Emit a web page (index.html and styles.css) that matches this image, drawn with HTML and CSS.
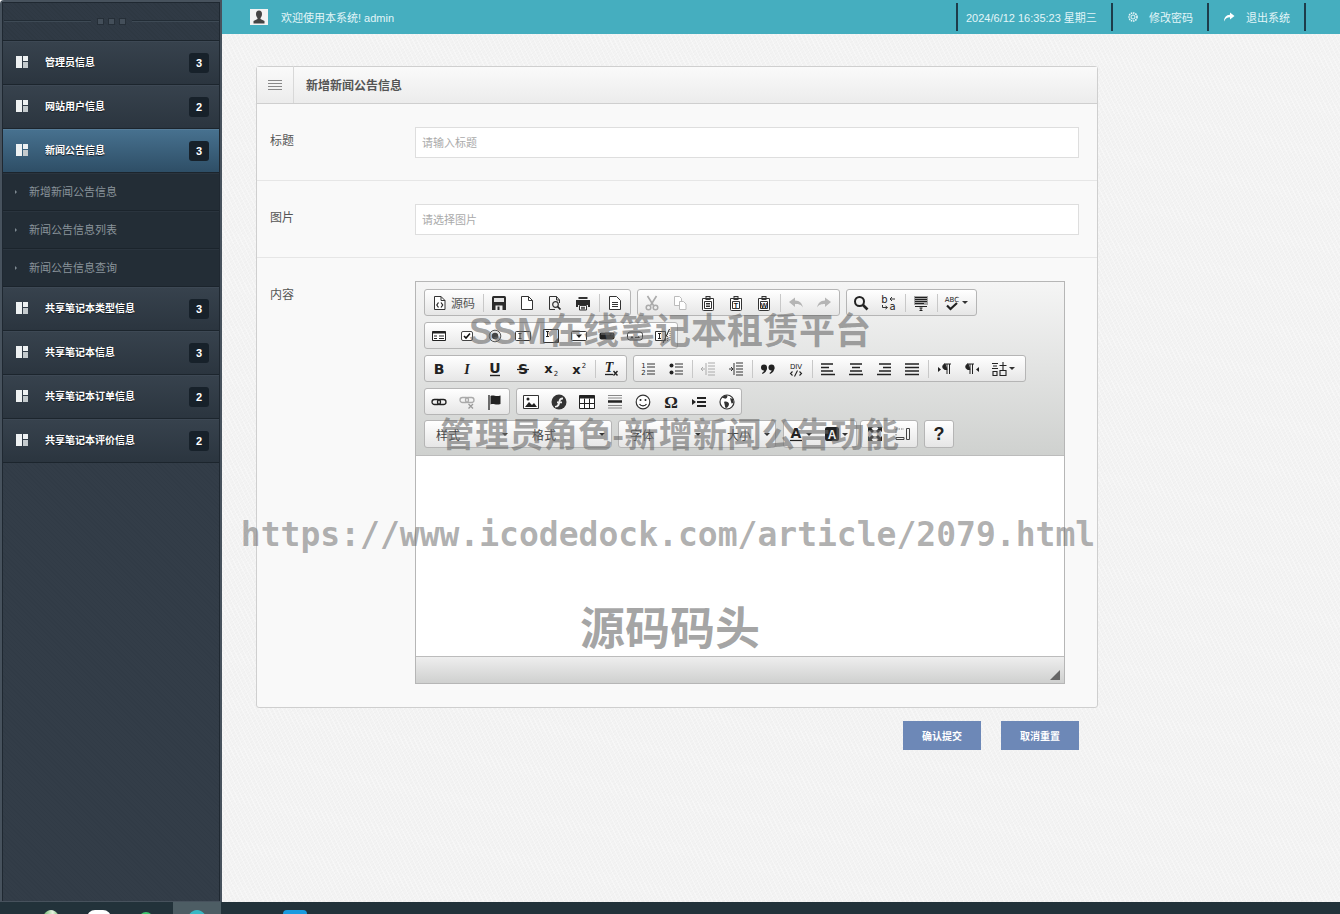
FILE: index.html
```html
<!DOCTYPE html>
<html lang="zh-CN">
<head>
<meta charset="utf-8">
<title>新增新闻公告信息</title>
<link rel="stylesheet" href="styles.css">
</head>
<body>
<svg class="defs" width="0" height="0">
  <symbol id="menu" viewBox="0 0 14 14"><path d="M0 2.500h14M0 5.500h14M0 8.500h14M0 11.500h14" stroke="currentColor" fill="none"/></symbol>
  <symbol id="grid" viewBox="0 0 14 14"><path d="M1 1h6v12H1z" fill="#eef1f2"/><path d="M8 1h5v5H8z" fill="#eef1f2"/><path d="M8 7h5v6H8z" fill="#c4cacd"/></symbol>
  <symbol id="source" viewBox="0 0 16 16"><path d="M2.500 1.500h6.500l4 4v9h-10.500z" fill="#fff" stroke="#333"/><path d="M9 1.500v4h4" fill="none" stroke="#333"/><path d="M6.500 7.500 4.800 10l1.700 2.500M9 7.500l1.700 2.500L9 12.500" fill="none" stroke="#222" stroke-width="1.200"/></symbol>
  <symbol id="save" viewBox="0 0 16 16"><path d="M1 2.500Q1 1 2.500 1h11Q15 1 15 2.500V15H1z" fill="#2b2b2b"/><path d="M3 3h10v4H3z" fill="#e4e4e4"/><path d="M4.500 10.500h7V15h-7z" fill="#eee"/><path d="M6.500 11.500h2V15h-2z" fill="#2b2b2b"/></symbol>
  <symbol id="newpage" viewBox="0 0 16 16"><path d="M2.500 1.500h7l4 4v9h-11z" fill="#fff" stroke="#333"/><path d="M9.500 1.500v4h4" fill="none" stroke="#333"/></symbol>
  <symbol id="preview" viewBox="0 0 16 16"><path d="M12.500 8V5l-3-3.500h-7v13H8" fill="none" stroke="#333"/><path d="M9.500 1.500V5h3" fill="none" stroke="#333"/><circle cx="8.500" cy="9.500" r="2.800" fill="none" stroke="#333" stroke-width="1.200"/><path d="m10.500 11.500 3 3" stroke="#222" stroke-width="1.700"/></symbol>
  <symbol id="print" viewBox="0 0 16 16"><path d="M3.500 2h9v2h-9z" fill="#333"/><path d="M1 5h14v7h-2v-2H3v2H1z" fill="#2b2b2b"/><path d="M4.500 10.500h7V15h-7z" fill="#fff" stroke="#333"/><path d="M6 12.300h4M6 13.800h4" stroke="#333"/></symbol>
  <symbol id="template" viewBox="0 0 16 16"><path d="M2.500 1.500h7l4 4v9h-11z" fill="#fff" stroke="#333"/><path d="M5 7.500h6M5 9.500h6M5 11.500h6" stroke="#333"/></symbol>
  <symbol id="cut" viewBox="0 0 16 16"><g stroke="#aaa" fill="none"><path d="M3.500 1l6 9.500M12.500 1l-6 9.500" stroke-width="1.600"/><circle cx="4.500" cy="12.500" r="2.300" stroke-width="1.500"/><circle cx="11.500" cy="12.500" r="2.300" stroke-width="1.500"/></g></symbol>
  <symbol id="copy" viewBox="0 0 16 16"><g stroke="#bbb" fill="#fff"><path d="M2.500 1.500h5l2 2v7h-7z"/><path d="M7.500 6.500h4l2.500 2.500v5.500H7.500z"/></g></symbol>
  <symbol id="clipboard" viewBox="0 0 16 16"><path d="M2.500 3.500h11v11q0 1-1 1h-9q-1 0-1-1z" fill="#fff" stroke="#333"/><path d="M5.500 1h5v4h-5z" fill="#333"/><path d="M6.500 2h3v1h-3z" fill="#ddd"/><path d="M4.500 6.500h7v7h-7z" fill="#fff" stroke="#333"/></symbol>
  <symbol id="undo" viewBox="0 0 16 16"><path d="M1 7l6-4.500V5.500c5 0 7 3 8 7-2-3-4-3.500-8-3.500v3z" fill="#b5b5b5"/></symbol>
  <symbol id="redo" viewBox="0 0 16 16"><path d="M15 7 9 2.500V5.500c-5 0-7 3-8 7 2-3 4-3.500 8-3.500v3z" fill="#b5b5b5"/></symbol>
  <symbol id="find" viewBox="0 0 16 16"><circle cx="6.500" cy="6.500" r="4.500" fill="none" stroke="#222" stroke-width="2"/><path d="m10 10 4.500 4.500" stroke="#222" stroke-width="2.600"/></symbol>
  <symbol id="selectall" viewBox="0 0 16 16"><path d="M1 1h14v9H1z" fill="#a5a5a5"/><path d="M2 2.500h12M2 4.500h12M2 6.500h12M2 8.500h9" stroke="#222"/><path d="M2 11.500h12M6.500 13h3M6.500 15.500h3M8 13v2.500" stroke="#222"/></symbol>
  <symbol id="form" viewBox="0 0 16 16"><path d="M1.500 3.500h13v9h-13z" fill="#fff" stroke="#222"/><path d="M1.500 3.500h13v2h-13z" fill="#222"/><path d="M3 8h3M3 10.500h3M8 8h5M8 10.500h5" stroke="#222" stroke-width="1.200"/></symbol>
  <symbol id="check" viewBox="0 0 16 16"><rect x="2.500" y="3.500" width="11" height="9" rx="1.500" fill="#fff" stroke="#444"/><path d="m5 8 2 2 4-4.500" fill="none" stroke="#111" stroke-width="1.600"/></symbol>
  <symbol id="radio" viewBox="0 0 16 16"><circle cx="8" cy="8" r="5.800" fill="#e4e4e4" stroke="#555"/><circle cx="8" cy="8" r="3.200" fill="#444"/></symbol>
  <symbol id="field" viewBox="0 0 16 16"><rect x=".5" y="3.500" width="15" height="9" rx="1" fill="#fff" stroke="#333"/><path d="M3.500 5.500h3M3.500 10.500h3M5 5.500v5" stroke="#222"/></symbol>
  <symbol id="area" viewBox="0 0 16 16"><path d="M.5 1.500h15v13H.5z" fill="#fff" stroke="#333"/><path d="M3 3.500h3M3 8.500h3M4.500 3.500v5" stroke="#222"/><path d="M11 14l4-4v4z" fill="#555"/></symbol>
  <symbol id="select" viewBox="0 0 16 16"><rect x=".5" y="3.500" width="15" height="9" rx="1" fill="#fff" stroke="#333"/><path d="M5 6.500h6L8 10z" fill="#222"/></symbol>
  <symbol id="button" viewBox="0 0 16 16"><rect x=".5" y="4.500" width="15" height="7" rx="2" fill="#222"/><path d="M2 6h12" stroke="#777"/></symbol>
  <symbol id="imgbutton" viewBox="0 0 16 16"><rect x=".5" y="4" width="15" height="8" rx="2.500" fill="#fff" stroke="#333"/><path d="M3 10.500l2-2.500 2 2.500 2-2 1 1 1.500-1.500 1.500 2z" fill="#222"/></symbol>
  <symbol id="hidden" viewBox="0 0 16 16"><path d="M.5 3.500h10v9H.5z" fill="#fff" stroke="#333"/><path d="M3 5.500h3M3 10.500h3M4.500 5.500v5" stroke="#222"/><path d="M14.500 1 8 15" stroke="#222"/><path d="M12.500 6v7M15 3v10" stroke="#666" stroke-dasharray="1 1"/></symbol>
  <symbol id="ul" viewBox="0 0 16 16"><circle cx="3.500" cy="4.500" r="2" fill="#222"/><circle cx="3.500" cy="11.500" r="2" fill="#222"/><path d="M7 3h8M7 6h8M7 10h8M7 13h8" stroke="#333" stroke-width="1.100"/></symbol>
  <symbol id="outdent" viewBox="0 0 16 16"><path d="M8 2h7M8 5h7M8 8h7M8 11h7M8 14h7M6 2v12" stroke="#aaa"/><path d="M5 8H1M3 6 1 8l2 2" fill="none" stroke="#aaa"/></symbol>
  <symbol id="indent" viewBox="0 0 16 16"><path d="M8 2h7M8 5h7M8 8h7M8 11h7M8 14h7M6 2v12" stroke="#333"/><path d="M1 8h4M3 6l2 2-2 2" fill="none" stroke="#333"/></symbol>
  <symbol id="quote" viewBox="0 0 16 16"><circle cx="4" cy="6.500" r="3" fill="#222"/><path d="M7 6.500c0 3.500-2 5.500-4.500 6.500l-.5-1c1.500-.8 2.200-2 2.500-4z" fill="#222"/><circle cx="11.500" cy="6.500" r="3" fill="#222"/><path d="M14.500 6.500c0 3.500-2 5.500-4.500 6.500l-.5-1c1.500-.8 2.200-2 2.500-4z" fill="#222"/></symbol>
  <symbol id="left" viewBox="0 0 16 16"><path d="M1 3h12M1 6.500h8M1 10h12M1 13.500h14" stroke="#222" stroke-width="1.500"/></symbol>
  <symbol id="center" viewBox="0 0 16 16"><path d="M2 3h12M4 6.500h8M2 10h12M1 13.500h14" stroke="#222" stroke-width="1.500"/></symbol>
  <symbol id="right" viewBox="0 0 16 16"><path d="M3 3h12M7 6.500h8M3 10h12M1 13.500h14" stroke="#222" stroke-width="1.500"/></symbol>
  <symbol id="justify" viewBox="0 0 16 16"><path d="M1 3h14M1 6.500h14M1 10h14M1 13.500h14" stroke="#222" stroke-width="1.500"/></symbol>
  <symbol id="ltr" viewBox="0 0 16 16"><path d="M2 6l3 2.500L2 11z" fill="#222"/><path d="M8 3h7M11 3v10M13.500 3v10M9 3a2.800 2.800 0 0 0 0 5.500h2z" fill="#222" stroke="#222"/></symbol>
  <symbol id="rtl" viewBox="0 0 16 16"><path d="M15 6l-3 2.500 3 2.500z" fill="#222"/><path d="M3 3h7M6 3v10M8.500 3v10M4 3a2.800 2.800 0 0 0 0 5.500h2z" fill="#222" stroke="#222"/></symbol>
  <symbol id="link" viewBox="0 0 16 16"><rect x="1" y="5.500" width="8.500" height="5" rx="2.500" fill="none" stroke="#222" stroke-width="1.300"/><rect x="6.500" y="5.500" width="8.500" height="5" rx="2.500" fill="none" stroke="#222" stroke-width="1.300"/></symbol>
  <symbol id="unlink" viewBox="0 0 16 16"><rect x="1" y="3.500" width="8.500" height="5" rx="2.500" fill="none" stroke="#aaa" stroke-width="1.300"/><rect x="6.500" y="3.500" width="8.500" height="5" rx="2.500" fill="none" stroke="#aaa" stroke-width="1.300"/><path d="m9.500 10 4.500 4.500M14 10l-4.500 4.500" stroke="#999" stroke-width="1.300"/></symbol>
  <symbol id="anchor" viewBox="0 0 16 16"><path d="M2 1v15" stroke="#222" stroke-width="1.300"/><path d="M3.500 2c3-1.500 5 1 10-.5v8.500c-5 1.500-7-1-10 .5z" fill="#222"/></symbol>
  <symbol id="image" viewBox="0 0 16 16"><path d="M.5 1.500h15v13H.5z" fill="#fff" stroke="#333"/><path d="M2 13l4-5 3 3 2-2 3 4z" fill="#222"/><circle cx="5" cy="5" r="1.500" fill="#222"/></symbol>
  <symbol id="flash" viewBox="0 0 16 16"><circle cx="8" cy="8" r="7.500" fill="#333"/><path d="M12 3.500C9 3.500 8 5 7.500 7.500H6v1.800h1C6.500 11 5.800 11.800 4 12v1.500c3.500 0 4.500-1.800 5-4.200h2V7.500H9.300C9.700 6 10.500 5.500 12 5.500z" fill="#eee"/></symbol>
  <symbol id="table" viewBox="0 0 16 16"><path d="M.5 1.500h15v13H.5z" fill="#fff" stroke="#222"/><path d="M.5 1.500h15v3H.5z" fill="#222"/><path d="M.5 9.500h15M5.500 4.500v10M10.500 4.500v10" stroke="#222"/></symbol>
  <symbol id="rule" viewBox="0 0 16 16"><path d="M1 1.500h14M1 4h14M1 11.500h14M1 14h14" stroke="#888"/><path d="M1 7.500h14" stroke="#222" stroke-width="2.500"/></symbol>
  <symbol id="smile" viewBox="0 0 16 16"><circle cx="8" cy="8" r="6.800" fill="#fff" stroke="#333" stroke-width="1.200"/><circle cx="5.500" cy="6" r="1" fill="#222"/><circle cx="10.500" cy="6" r="1" fill="#222"/><path d="M4.500 10c1.500 2.500 5.500 2.500 7 0" fill="none" stroke="#222" stroke-width="1.200"/></symbol>
  <symbol id="pagebreak" viewBox="0 0 16 16"><path d="M1 5l4 3-4 3z" fill="#222"/><path d="M6 4h9M6 8h9M6 12h9" stroke="#222" stroke-width="2"/></symbol>
  <symbol id="iframe" viewBox="0 0 16 16"><circle cx="8" cy="8" r="7" fill="#fff" stroke="#333" stroke-width="1.200"/><path d="M3 4c2 0 3 1 4 .5S9 2 8 1.500 4 2 3 4zM5 8c2-1 5 0 5 2s-2 4-3 4-1-3-2-6zM11 4l3 1 .5 4-2 .5z" fill="#333"/></symbol>
  <symbol id="lang" viewBox="0 0 16 16"><path d="M1 2.500h6M2 5h4M1 7.500h6M2 10.500h4v4H2zM8.500 4.500h7M12 1v8M9 9.500h6v5H9z" fill="none" stroke="#222" stroke-width="1.100"/></symbol>
  <symbol id="maximize" viewBox="0 0 16 16"><path d="M1 1h5L4.500 2.500 7 5 5 7 2.500 4.500 1 6zM15 1v5l-1.500-1.500L11 7 9 5l2.500-2.500L10 1zM1 15v-5l1.500 1.500L5 9l2 2-2.500 2.500L6 15zM15 15h-5l1.500-1.500L9 11l2-2 2.500 2.500L15 10z" fill="#222"/></symbol>
  <symbol id="blocks" viewBox="0 0 16 16"><path d="M1 3h8M1 3v7" fill="none" stroke="#777" stroke-dasharray="1.500 1"/><path d="M11.500 2.500h3v11h-3zM1 11.500h8v2H1z" fill="none" stroke="#444"/></symbol>
  <symbol id="share" viewBox="0 0 12 12"><path d="M7 1.500 11.500 5 7 8.500V6.300C4 6.300 2.500 7.500 1 10.500 1 6.500 3 4 7 3.800z" fill="#fff"/></symbol>
  <symbol id="gear" viewBox="0 0 12 12"><circle cx="6" cy="6" r="4" fill="none" stroke="#eaf8fa" stroke-width="1.600" stroke-dasharray="1.500 .8"/><circle cx="6" cy="6" r="2" fill="none" stroke="#eaf8fa"/></symbol>
</svg>

<div class="shell">
  <aside class="sidebar">
    <div class="side-head">
      <span class="side-rule"></span>
      <span class="dots"><i></i><i></i><i></i></span>
      <span class="side-rule"></span>
    </div>
    <nav class="side-nav">
      <a class="nav-item"><svg class="nav-ico"><use href="#grid"/></svg><span class="nav-text">管理员信息</span><b class="badge">3</b></a>
      <a class="nav-item"><svg class="nav-ico"><use href="#grid"/></svg><span class="nav-text">网站用户信息</span><b class="badge">2</b></a>
      <a class="nav-item active"><svg class="nav-ico"><use href="#grid"/></svg><span class="nav-text">新闻公告信息</span><b class="badge">3</b></a>
      <a class="sub-item"><span>新增新闻公告信息</span></a>
      <a class="sub-item"><span>新闻公告信息列表</span></a>
      <a class="sub-item"><span>新闻公告信息查询</span></a>
      <a class="nav-item"><svg class="nav-ico"><use href="#grid"/></svg><span class="nav-text">共享笔记本类型信息</span><b class="badge">3</b></a>
      <a class="nav-item"><svg class="nav-ico"><use href="#grid"/></svg><span class="nav-text">共享笔记本信息</span><b class="badge">3</b></a>
      <a class="nav-item"><svg class="nav-ico"><use href="#grid"/></svg><span class="nav-text">共享笔记本订单信息</span><b class="badge">2</b></a>
      <a class="nav-item"><svg class="nav-ico"><use href="#grid"/></svg><span class="nav-text">共享笔记本评价信息</span><b class="badge">2</b></a>
    </nav>
  </aside>

  <div class="main">
    <header class="topbar">
      <span class="avatar">
        <svg viewBox="0 0 18 16" width="18" height="16"><path d="M6 5a3 3.500 0 0 1 6 0c0 2-1 3.500-1.500 4v1l4 2v2.500h-11V12l4-2V9C7 8.500 6 7 6 5z" fill="#444"/></svg>
      </span>
      <span class="welcome">欢迎使用本系统! admin</span>
      <div class="top-links">
        <span class="top-cell">2024/6/12 16:35:23 星期三</span>
        <a class="top-cell pwd"><svg class="top-ico"><use href="#gear"/></svg>修改密码</a>
        <a class="top-cell quit"><svg class="top-ico"><use href="#share"/></svg>退出系统</a>
      </div>
    </header>

    <section class="content">
      <div class="panel">
        <div class="panel-head">
          <span class="head-ico"><svg width="14" height="14"><use href="#menu"/></svg></span>
          <h1 class="panel-title">新增新闻公告信息</h1>
        </div>
        <div class="row">
          <label class="row-label">标题</label>
          <input class="text-input" placeholder="请输入标题">
        </div>
        <div class="row">
          <label class="row-label">图片</label>
          <input class="text-input" placeholder="请选择图片">
        </div>
        <div class="row last">
          <label class="row-label">内容</label>
          <div class="editor">
            <div class="toolbar">
              <div class="tb-row">
                <div class="tb-group pad">
                  <span class="btn wide"><svg><use href="#source"/></svg><em>源码</em></span><i class="sep"></i>
                  <span class="btn"><svg><use href="#save"/></svg></span>
                  <span class="btn"><svg><use href="#newpage"/></svg></span>
                  <span class="btn"><svg><use href="#preview"/></svg></span>
                  <span class="btn"><svg><use href="#print"/></svg></span><i class="sep"></i>
                  <span class="btn"><svg><use href="#template"/></svg></span>
                </div>
                <div class="tb-group pad">
                  <span class="btn"><svg><use href="#cut"/></svg></span>
                  <span class="btn"><svg><use href="#copy"/></svg></span>
                  <span class="btn"><svg viewBox="0 0 16 16"><use href="#clipboard" width="16" height="16"/><path d="M6 8.500h4M6 10h4M6 11.500h4" stroke="#333"/></svg></span>
                  <span class="btn"><svg viewBox="0 0 16 16"><use href="#clipboard" width="16" height="16"/><text x="8" y="12.500" class="tiny">T</text></svg></span>
                  <span class="btn"><svg viewBox="0 0 16 16"><use href="#clipboard" width="16" height="16"/><text x="8" y="12.500" class="tiny">W</text></svg></span><i class="sep"></i>
                  <span class="btn"><svg><use href="#undo"/></svg></span>
                  <span class="btn"><svg><use href="#redo"/></svg></span>
                </div>
                <div class="tb-group">
                  <span class="btn"><svg><use href="#find"/></svg></span>
                  <span class="btn"><svg viewBox="0 0 16 16"><text x="3.500" y="7.500" class="mid">b</text><text x="11.500" y="15" class="mid">a</text><path d="M9 4h5M11 2 9 4l2 2M1.500 10v2.500H6M4.500 11l2 1.500-2 1.500" fill="none" stroke="#333"/></svg></span><i class="sep"></i>
                  <span class="btn"><svg><use href="#selectall"/></svg></span><i class="sep"></i>
                  <span class="btn drop"><svg viewBox="0 0 16 16"><text x="8" y="7" class="small">ABC</text><path d="M3 10.500l3.500 3.500L13 8" fill="none" stroke="#222" stroke-width="2.200"/></svg><u class="caret"></u></span>
                </div>
              </div>
              <div class="tb-row">
                <div class="tb-group">
                  <span class="btn"><svg><use href="#form"/></svg></span>
                  <span class="btn"><svg><use href="#check"/></svg></span>
                  <span class="btn"><svg><use href="#radio"/></svg></span>
                  <span class="btn"><svg><use href="#field"/></svg></span>
                  <span class="btn"><svg><use href="#area"/></svg></span>
                  <span class="btn"><svg><use href="#select"/></svg></span>
                  <span class="btn"><svg><use href="#button"/></svg></span>
                  <span class="btn"><svg><use href="#imgbutton"/></svg></span>
                  <span class="btn"><svg><use href="#hidden"/></svg></span>
                </div>
              </div>
              <div class="tb-row">
                <div class="tb-group pad">
                  <span class="btn"><svg viewBox="0 0 16 16"><text x="8" y="13" class="big">B</text></svg></span>
                  <span class="btn"><svg viewBox="0 0 16 16"><text x="8" y="13" class="big ital">I</text></svg></span>
                  <span class="btn"><svg viewBox="0 0 16 16"><text x="8" y="11.500" class="big">U</text><path d="M3 14.500h10" stroke="#222" stroke-width="1.400"/></svg></span>
                  <span class="btn"><svg viewBox="0 0 16 16"><text x="8" y="13" class="big">S</text><path d="M2 8.500h12" stroke="#222" stroke-width="1.200"/></svg></span>
                  <span class="btn"><svg viewBox="0 0 16 16"><text x="5.500" y="11.500" class="big2">x</text><text x="13" y="15" class="small">2</text></svg></span>
                  <span class="btn"><svg viewBox="0 0 16 16"><text x="5.500" y="13" class="big2">x</text><text x="13" y="7" class="small">2</text></svg></span><i class="sep"></i>
                  <span class="btn"><svg viewBox="0 0 16 16"><text x="6" y="11" class="big ital">T</text><path d="M2 13.500h8" stroke="#222" stroke-width="1.300"/><path d="m10.500 10 4 4.500M14.500 10l-4 4.500" stroke="#222" stroke-width="1.400"/></svg></span>
                </div>
                <div class="tb-group pad">
                  <span class="btn"><svg viewBox="0 0 16 16"><text x="3.500" y="6.500" class="small">1</text><text x="3.500" y="14" class="small">2</text><path d="M7 3h8M7 6h8M7 10h8M7 13h8" stroke="#333" stroke-width="1.100"/></svg></span>
                  <span class="btn"><svg><use href="#ul"/></svg></span><i class="sep"></i>
                  <span class="btn"><svg><use href="#outdent"/></svg></span>
                  <span class="btn"><svg><use href="#indent"/></svg></span><i class="sep"></i>
                  <span class="btn"><svg><use href="#quote"/></svg></span>
                  <span class="btn"><svg viewBox="0 0 16 16"><text x="8" y="8" class="small">DIV</text><path d="M4.500 10.500 2.500 12.500l2 2M11.500 10.500l2 2-2 2M9.500 9.500l-3 6" fill="none" stroke="#222" stroke-width="1.100"/></svg></span><i class="sep"></i>
                  <span class="btn"><svg><use href="#left"/></svg></span>
                  <span class="btn"><svg><use href="#center"/></svg></span>
                  <span class="btn"><svg><use href="#right"/></svg></span>
                  <span class="btn"><svg><use href="#justify"/></svg></span><i class="sep"></i>
                  <span class="btn"><svg><use href="#ltr"/></svg></span>
                  <span class="btn"><svg><use href="#rtl"/></svg></span>
                  <span class="btn drop lang"><svg><use href="#lang"/></svg><u class="caret"></u></span>
                </div>
              </div>
              <div class="tb-row">
                <div class="tb-group">
                  <span class="btn"><svg><use href="#link"/></svg></span>
                  <span class="btn"><svg><use href="#unlink"/></svg></span>
                  <span class="btn"><svg><use href="#anchor"/></svg></span>
                </div>
                <div class="tb-group">
                  <span class="btn"><svg><use href="#image"/></svg></span>
                  <span class="btn"><svg><use href="#flash"/></svg></span>
                  <span class="btn"><svg><use href="#table"/></svg></span>
                  <span class="btn"><svg><use href="#rule"/></svg></span>
                  <span class="btn"><svg><use href="#smile"/></svg></span>
                  <span class="btn"><svg viewBox="0 0 16 16"><text x="8" y="14" class="huge">Ω</text></svg></span>
                  <span class="btn"><svg><use href="#pagebreak"/></svg></span>
                  <span class="btn"><svg><use href="#iframe"/></svg></span>
                </div>
              </div>
              <div class="tb-row combos">
                <div class="tb-group">
                  <span class="combo c-style">样式<u class="caret"></u></span>
                  <span class="combo c-format">格式<u class="caret"></u></span>
                </div>
                <div class="tb-group">
                  <span class="combo c-font">字体<u class="caret"></u></span>
                  <span class="combo c-size">大小<u class="caret"></u></span>
                </div>
                <div class="tb-group color-group">
                  <span class="btn drop"><svg viewBox="0 0 16 16"><text x="8" y="12" class="big">A</text><path d="M2 14.500h12" stroke="#222" stroke-width="1.200"/></svg><u class="caret"></u></span>
                  <span class="btn drop"><svg viewBox="0 0 16 16"><rect x="1" y="1" width="14" height="14" rx="2" fill="#222"/><text x="8" y="12.500" class="bigw">A</text></svg><u class="caret"></u></span>
                </div>
                <div class="tb-group tight">
                  <span class="btn"><svg><use href="#maximize"/></svg></span>
                  <span class="btn"><svg><use href="#blocks"/></svg></span>
                </div>
                <div class="tb-group">
                  <span class="btn help-mark">?</span>
                </div>
              </div>
            </div>
            <div class="edit-area"></div>
            <div class="edit-foot"><span class="grip"></span></div>
          </div>
        </div>
      </div>
      <div class="actions">
        <button class="action" type="button">确认提交</button>
        <button class="action" type="button">取消重置</button>
      </div>
    </section>
  </div>
</div>

<footer class="taskbar">
  <span class="task t-green"></span>
  <span class="task t-white"></span>
  <span class="task t-lime"></span>
  <span class="task-on"><span class="task t-teal"></span></span>
  <span class="task t-blue"></span>
</footer>

<div class="stamp">
  <p class="stamp-line s1">SSM在线笔记本租赁平台</p>
  <p class="stamp-line s2">管理员角色-新增新闻公告功能</p>
  <p class="stamp-line s3">https://www.icodedock.com/article/2079.html</p>
  <p class="stamp-line s4">源码码头</p>
</div>
</body>
</html>
```

FILE: styles.css
```css
* { box-sizing: border-box; }

html, body {
  margin: 0;
  height: 914px;
  overflow: hidden;
}

body {
  position: relative;
  font-family: "Liberation Sans", "Noto Sans CJK SC", sans-serif;
  font-size: 12px;
  color: #555;
  background:
    repeating-linear-gradient(63deg, rgba(255, 255, 255, .35) 0 1px, transparent 1px 4px),
    repeating-linear-gradient(-37deg, rgba(0, 0, 0, .012) 0 1px, transparent 1px 3px),
    #f3f3f3;
}

.defs { position: absolute; }

.tiny, .small, .mid, .big, .big2, .bigw, .huge {
  font-family: "Liberation Sans", sans-serif;
  text-anchor: middle;
  fill: #222;
}
.tiny { font-size: 7px; font-weight: 700; }
.small { font-size: 7px; font-family: "DejaVu Sans", sans-serif; }
.mid { font-size: 10px; font-family: "DejaVu Sans", sans-serif; }
.big { font-size: 14px; font-weight: 700; font-family: "DejaVu Sans", sans-serif; }
.big2 { font-size: 13px; font-weight: 700; font-family: "DejaVu Sans", sans-serif; }
.bigw { font-size: 12px; font-weight: 700; fill: #eee; }
.huge { font-size: 17px; font-weight: 700; font-family: "Liberation Serif", serif; }
.ital { font-style: italic; font-family: "Liberation Serif", serif; }

.shell {
  display: flex;
  height: 902px;
}

/* Side navigation */
.sidebar {
  flex: none;
  width: 222px;
  padding: 2px 2px 0 2px;
  background: #47525d;
  border-radius: 4px 0 0 0;
}

.side-nav,
.side-head {
  border-left: 1px solid #1f2831;
  border-right: 1px solid #1f2831;
}

.side-nav {
  height: 860px;
  background: repeating-linear-gradient(45deg, #313b46 0 1px, #333d48 1px 3px);
}

.side-head {
  display: flex;
  align-items: center;
  height: 39px;
  padding: 0 0 1px 1px;
  gap: 6px;
  border-top: 1px solid #1f2831;
  border-bottom: 1px solid #1c252d;
  background: repeating-linear-gradient(45deg, #2e3842 0 1px, #303a45 1px 3px);
}

.side-rule {
  flex: 1;
  height: 2px;
  background: #3e4a55;
  border-top: 1px solid #222c35;
}

.dots { display: flex; gap: 4px; }
.dots i {
  width: 7px;
  height: 7px;
  background: #444f5a;
  border: 1px solid #262f38;
}

.nav-item {
  display: flex;
  align-items: center;
  height: 44px;
  padding: 0 10px 0 12px;
  color: #fff;
  font-size: 10px;
  font-weight: 700;
  background: linear-gradient(#37424d, #2b353f);
  border-top: 1px solid #3d4854;
  border-bottom: 1px solid #1c252d;
}

.nav-item.active {
  background: linear-gradient(#47718f, #2e4e66);
  border-top-color: #567c98;
}

.nav-ico {
  flex: none;
  width: 14px;
  height: 14px;
  margin: 0 15px 0 0;
  position: relative;
  top: -1px;
}

.nav-text {
  flex: 1;
  position: relative;
  top: -2px;
  left: 1px;
  text-shadow: 0 1px 1px #10171d;
}

.badge {
  width: 20px;
  height: 20px;
  border-radius: 3px;
  background: #17212a;
  color: #fff;
  font-size: 11px;
  line-height: 20px;
  text-align: center;
}

.sub-item {
  display: flex;
  align-items: center;
  height: 38px;
  padding-left: 26px;
  font-size: 11px;
  color: #8a949b;
  background: #232d36;
  border-bottom: 1px solid #1b242c;
  border-top: 1px solid #2a343e;
  position: relative;
}
.sub-item span { margin-top: -2px; }

.sub-item::before {
  content: "";
  position: absolute;
  left: 12px;
  top: 16px;
  width: 0;
  height: 0;
  border-left: 2px solid #7f8a92;
  border-top: 2px solid transparent;
  border-bottom: 2px solid transparent;
}

/* Main column */
.main {
  flex: 1;
  display: flex;
  flex-direction: column;
  min-width: 0;
}

.topbar {
  flex: none;
  display: flex;
  align-items: center;
  height: 34px;
  padding-left: 28px;
  background: #45aebf;
  color: #e2f5f8;
  font-size: 11px;
}

.avatar {
  display: flex;
  width: 18px;
  height: 16px;
  background: #f3f3f3;
}

.welcome { margin-left: 13px; }

.top-links {
  display: flex;
  align-items: center;
  margin-left: auto;
  margin-right: 34px;
}

.top-cell {
  display: flex;
  align-items: center;
  height: 28px;
  border-left: 2px solid #1d3c4a;
  padding-left: 8px;
}
.top-cell:first-child { width: 155px; }
.pwd { width: 96px; padding-left: 14px; }
.quit { width: 99px; padding-left: 14px; border-right: 2px solid #1d3c4a; }
.top-ico { width: 12px; height: 12px; margin-right: 10px; }
.quit .top-ico { margin-right: 11px; }

.content {
  flex: 1;
  padding: 32px 0 0 34px;
}

.panel {
  width: 842px;
  background: #f9f9f9;
  border: 1px solid #cfcfcf;
  border-radius: 3px;
}

.panel-head {
  display: flex;
  align-items: center;
  height: 37px;
  padding-bottom: 2px;
  background: linear-gradient(#fafafa, #ececec);
  border-bottom: 1px solid #cfcfcf;
}

.head-ico {
  display: flex;
  align-items: center;
  justify-content: center;
  width: 37px;
  height: 37px;
  margin-top: 1px;
  color: #888;
  border-right: 1px solid #d8d8d8;
}

.panel-title {
  margin: 0 0 0 12px;
  font-size: 12px;
  font-weight: 700;
  color: #555;
}

.row {
  display: flex;
  padding: 23px 0 22px 13px;
  border-bottom: 1px solid #e6e6e6;
}
.row.last { border-bottom: 0; padding-bottom: 23px; }

.row-label {
  flex: none;
  width: 145px;
  padding-top: 4px;
  color: #555;
}

.text-input {
  width: 664px;
  height: 31px;
  padding: 0 6px;
  border: 1px solid #dedede;
  background: #fff;
  font: 11px "Liberation Sans", "Noto Sans CJK SC", sans-serif;
  outline: 0;
}
.text-input::placeholder { color: #aaa; }

/* Rich text editor */
.editor {
  width: 650px;
  height: 403px;
  display: flex;
  flex-direction: column;
  border: 1px solid #b6b6b6;
}

.toolbar {
  flex: none;
  height: 174px;
  padding: 7px 0 0 8px;
  background: linear-gradient(#f5f5f5, #cfd1cf);
  border-bottom: 1px solid #bcbcbc;
}

.tb-row {
  display: flex;
  gap: 6px;
  height: 27px;
  margin-bottom: 6px;
}
.tb-row.combos { height: 28px; margin: -1px 0 0; }

.tb-group {
  display: flex;
  align-items: center;
  height: 100%;
  background: linear-gradient(#fff, #e6e6e6);
  border: 1px solid #b5b5b5;
  border-radius: 3px;
}
.tb-group.pad { padding-right: 1px; }

.btn {
  flex: none;
  display: flex;
  align-items: center;
  justify-content: center;
  width: 28px;
  height: 100%;
}
.btn svg { width: 16px; height: 16px; flex: none; }
.btn em {
  margin-left: 3px;
  font-style: normal;
  font-size: 12px;
  color: #555;
}
.btn.wide { width: 56px; justify-content: flex-start; padding-left: 7px; }
.btn.drop { width: 37px; padding-right: 4px; gap: 2px; }
.btn.lang { width: 38px; }

.sep {
  flex: none;
  width: 4px;
  height: 18px;
  background: linear-gradient(#c8c8c8, #c8c8c8) center / 1px 100% no-repeat;
}

.caret {
  flex: none;
  width: 0;
  height: 0;
  border-top: 3px solid #333;
  border-left: 3px solid transparent;
  border-right: 3px solid transparent;
}

.combo {
  display: flex;
  align-items: center;
  justify-content: space-between;
  height: 100%;
  color: #444;
  font-size: 12px;
}
.c-style { width: 97px; padding: 0 14px 0 11px; }
.c-format { width: 89px; padding: 0 6px 0 10px; }
.c-font { width: 93px; padding: 0 11px 0 11px; }
.c-size { width: 63px; padding: 0 5px 0 15px; }

.color-group { margin-left: 1px; }
.color-group .btn.drop { width: 36px; }
.tb-group.tight { margin-left: -3px; }
.help-mark {
  font: 700 18px "Liberation Sans", sans-serif;
  color: #222;
}

.edit-area {
  flex: 1;
  background: #fff;
}

.edit-foot {
  flex: none;
  position: relative;
  height: 27px;
  background: linear-gradient(#eeeeee, #cfd0cf);
  border-top: 1px solid #bcbcbc;
}

.grip {
  position: absolute;
  right: 4px;
  bottom: 3px;
  width: 0;
  height: 0;
  border-left: 10px solid transparent;
  border-bottom: 10px solid #666;
}

.actions {
  display: flex;
  justify-content: flex-end;
  gap: 20px;
  width: 823px;
  margin-top: 13px;
}

.action {
  width: 78px;
  height: 29px;
  padding: 0;
  border: 0;
  background: #6d88b7;
  color: #fff;
  font: 700 10px "Liberation Sans", "Noto Sans CJK SC", sans-serif;
}

/* Bottom strip */
.taskbar {
  position: relative;
  height: 12px;
  display: flex;
  overflow: hidden;
  background: #22323a;
}

.task {
  position: absolute;
  top: 8px;
  width: 18px;
  height: 24px;
  border-radius: 50%;
}
.t-green { left: 42px; background: linear-gradient(90deg, #58b05c, #e6f2e0 60%, #58b05c); }
.t-white { left: 87px; width: 24px; background: #fff; border-radius: 8px; }
.t-lime { left: 137px; top: 10px; background: #3cc76e; }
.task-on {
  position: absolute;
  left: 173px;
  width: 48px;
  height: 12px;
  background: #4d5d64;
}
.t-teal { left: 14px; top: 8px; width: 20px; background: #38b8c4; }
.t-blue { left: 283px; width: 24px; border-radius: 4px; background: #1b9be0; }

/* Overlaid site stamp */
.stamp {
  position: absolute;
  inset: 0;
  pointer-events: none;
}

.stamp-line {
  position: absolute;
  left: 0;
  width: 1340px;
  margin: 0;
  text-align: center;
  white-space: nowrap;
  font-family: "Liberation Sans", "Noto Sans CJK SC", sans-serif;
  font-weight: 700;
  color: rgba(105, 105, 105, 0.6);
  line-height: 1;
}
.s1 { top: 314px; font-size: 36px; }
.s2 { top: 418px; font-size: 34px; letter-spacing: .4px; }
.s3 {
  top: 518px;
  left: -2px;
  font-size: 33px;
  font-family: "DejaVu Sans Mono", monospace;
  color: rgba(110, 110, 110, 0.55);
}
.s4 { top: 607px; font-size: 45px; }
```
